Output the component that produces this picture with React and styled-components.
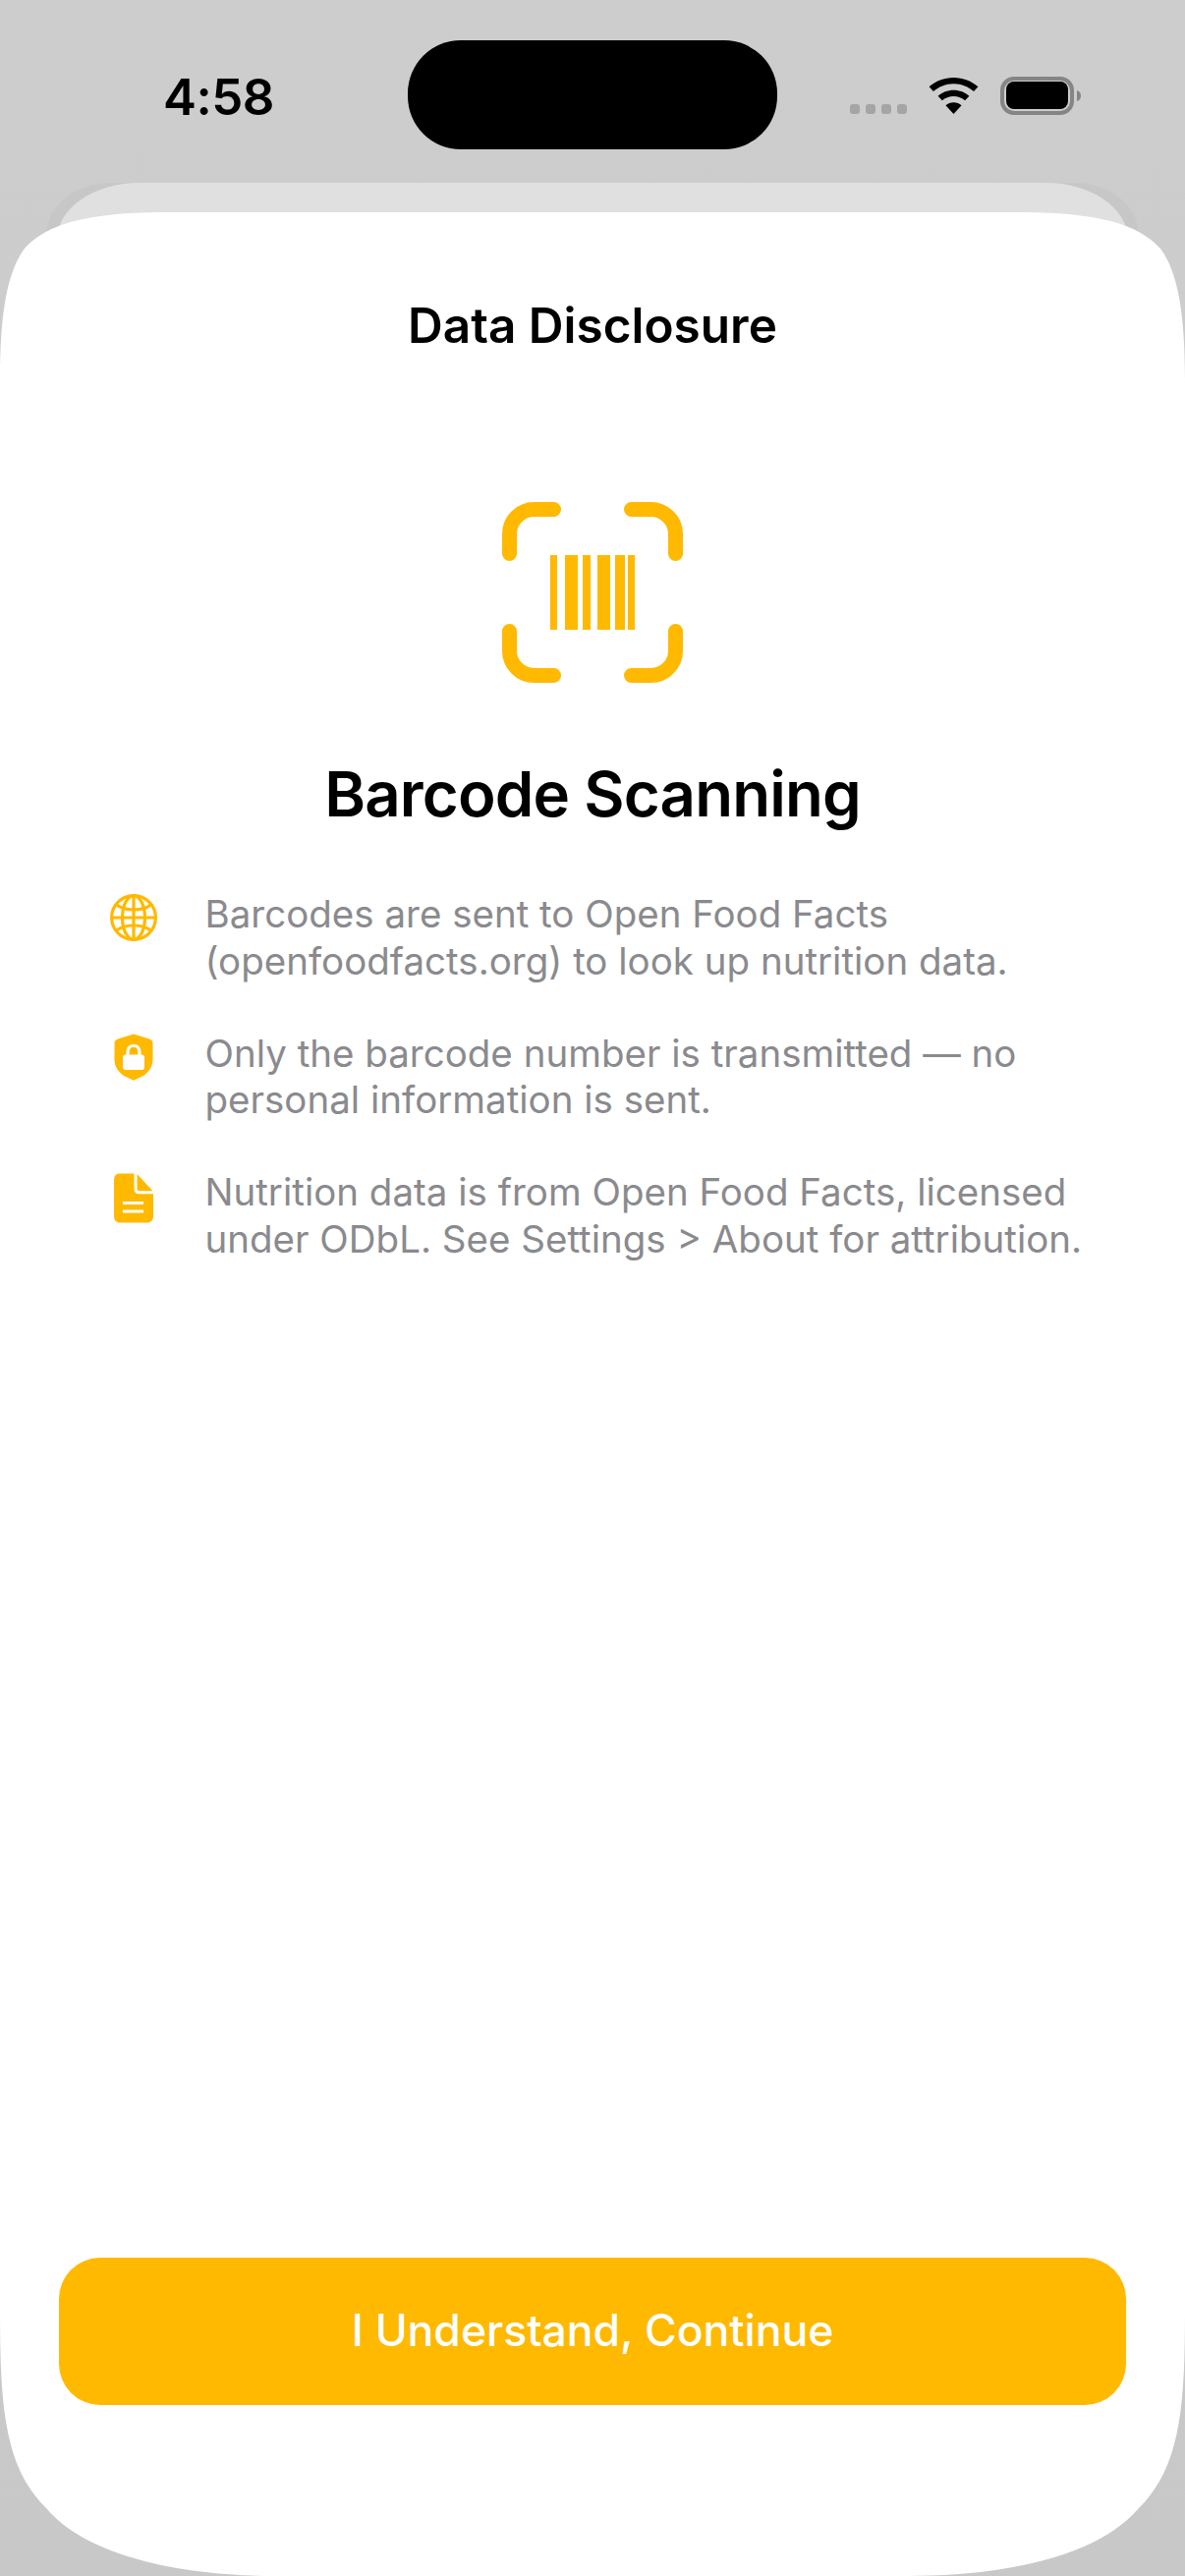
import React from 'react';
import styled, { createGlobalStyle } from 'styled-components';

const amber = '#ffb900';
const sans = '"Inter", "Liberation Sans", sans-serif';

const GlobalStyle = createGlobalStyle`
  html, body { margin: 0; padding: 0; background: #cbcbcb; }
  * { box-sizing: border-box; }
`;

const Screen = styled.div`
  position: relative;
  width: 1206px;
  height: 2622px;
  overflow: hidden;
  font-family: ${sans};
  background: linear-gradient(#cdcdcd, #c8c8c8);
`;

const StatusBar = styled.div`
  height: 186px;
  padding: 41px 66px 0 166px;
  display: flex;
  align-items: flex-start;
`;

const Time = styled.div`
  width: 249px;
  margin-top: 28px;
  font-size: 51px;
  line-height: 60px;
  font-weight: 600;
  letter-spacing: -0.5px;
  color: #000;
`;

const Island = styled.div`
  width: 376px;
  height: 111px;
  border-radius: 54px;
  background: #000;
`;

const StatusIcons = styled.div`
  margin-left: 74px;
  margin-top: 37px;
  display: flex;
  align-items: flex-start;
`;

const Signal = styled.div`
  display: flex;
  gap: 6px;
  margin-top: 28px;
  margin-right: 22px;
`;

const SignalDot = styled.span`
  width: 10px;
  height: 10px;
  border-radius: 3px;
  background: #a5a5a5;
`;

const SheetShadow = styled.div`
  margin: 0 48px;
  height: 100px;
  background: #c7c7c7;
  border-radius: 66px 66px 0 0 / 50px 50px 0 0;
`;

const SheetBehind = styled.div`
  margin: 0 10px;
  height: 100px;
  background: #e0e0e0;
  border-radius: 84px 84px 0 0 / 58px 58px 0 0;
`;

const Sheet = styled.main`
  position: absolute;
  left: 0;
  top: 216px;
  width: 1206px;
  height: 2406px;
  padding-top: 81px;
  background: #fff;
  display: flex;
  flex-direction: column;
  align-items: center;
  clip-path: path('M170 0 L1036 0 C1126 0 1161 15 1181 37 C1198 60 1206 100 1206 170 L1206 2136 C1206 2236 1201 2296 1158 2338 C1121 2381 1036 2406 924 2406 L282 2406 C170 2406 85 2381 48 2338 C5 2296 0 2236 0 2136 L0 170 C0 100 8 60 25 37 C45 15 80 0 170 0 Z');
`;

const NavTitle = styled.h1`
  margin: 0;
  font-size: 49.5px;
  line-height: 68px;
  font-weight: 600;
  color: #000;
`;

const Hero = styled.div`
  margin-top: 146px;
  width: 184px;
  height: 184px;
  color: ${amber};
  line-height: 0;
`;

const Heading = styled.h2`
  margin: 71px 0 0;
  font-size: 63.5px;
  line-height: 84px;
  font-weight: 600;
  letter-spacing: -0.85px;
  color: #000;
`;

const Points = styled.ul`
  list-style: none;
  margin: 57px 0 0;
  padding: 0;
  width: 100%;
  display: flex;
  flex-direction: column;
  gap: 46.5px;
`;

const Point = styled.li`
  display: grid;
  grid-template-columns: 208.5px 1fr;
`;

const PointIcon = styled.div`
  width: 80px;
  margin-left: 96px;
  padding-top: ${p => p.$top}px;
  display: flex;
  justify-content: center;
  align-items: flex-start;
  color: ${amber};
  line-height: 0;
`;

const PointText = styled.p`
  margin: 0;
  font-size: 38.5px;
  line-height: 47.5px;
  font-weight: 400;
  color: #8a8a8e;
  white-space: nowrap;
`;

const Footer = styled.div`
  margin-top: auto;
  width: 100%;
  padding: 0 60px 174px;
`;

const PrimaryButton = styled.button`
  display: block;
  width: 100%;
  height: 150px;
  padding: 0 0 2px;
  border: 0;
  border-radius: 42px;
  background: ${amber};
  color: #fff;
  font-family: ${sans};
  font-size: 44.5px;
  font-weight: 550;
`;

const Wifi = () => (
  <svg width="51" height="37" viewBox="0 0 50 38" preserveAspectRatio="none" style={{ marginTop: 1, marginRight: 22 }}>
    <path fill="#000" d="M25 0C15.600 0 7 3.600.6 9.600l4.200 4.800C10 9.500 17.200 6.300 25 6.300s15 3.200 20.200 8.100l4.200-4.800C43 3.600 34.400 0 25 0Z" />
    <path fill="#000" d="M25 13c-6 0-11.500 2.300-15.600 6.200l4.200 4.700c3-2.800 7-4.500 11.400-4.500s8.400 1.700 11.400 4.500l4.200-4.700C36.500 15.300 31 13 25 13Z" />
    <path fill="#000" d="M25 26c-3 0-5.800 1.100-7.900 3.100L25 38l7.900-8.900C30.800 27.100 28 26 25 26Z" />
  </svg>
);

const Battery = () => (
  <svg width="82" height="39" viewBox="0 0 82 39">
    <rect x="2" y="2" width="71" height="35" rx="12" fill="none" stroke="#858585" strokeWidth="4" />
    <rect x="6" y="5" width="63" height="28" rx="8" fill="#000" />
    <path fill="#858585" d="M78 14c2.600.8 4 2.800 4 5.500s-1.400 4.700-4 5.500Z" />
  </svg>
);

const ScanIcon = () => (
  <svg width="184" height="184" viewBox="0 0 184 184">
    <g fill="none" stroke="currentColor" strokeWidth="15" strokeLinecap="round" strokeLinejoin="round">
      <path d="M7.500 52.500V32.500a25 25 0 0 1 25-25h20" />
      <path d="M131.500 7.500h20a25 25 0 0 1 25 25v20" />
      <path d="M7.500 131.500v20a25 25 0 0 0 25 25h20" />
      <path d="M131.500 176.500h20a25 25 0 0 0 25-25v-20" />
    </g>
    <g fill="currentColor">
      <rect x="49" y="54" width="7" height="76" />
      <rect x="64" y="54" width="13" height="76" />
      <rect x="82" y="54" width="8" height="76" />
      <rect x="97" y="54" width="13" height="76" />
      <rect x="115" y="54" width="10" height="76" />
      <rect x="128" y="54" width="7" height="76" />
    </g>
  </svg>
);

const GlobeIcon = () => (
  <svg width="48" height="48" viewBox="0 0 48 48" fill="none" stroke="currentColor" strokeWidth="3.200">
    <circle cx="24" cy="24" r="22.400" />
    <path d="M24 1.500v45M1.500 24h45" />
    <ellipse cx="24" cy="24" rx="11.500" ry="22.400" />
    <path d="M6 10.500c5 4 11 5.500 18 5.500s13-1.500 18-5.500M6 37.500c5-4 11-5.500 18-5.500s13 1.500 18 5.500" />
  </svg>
);

const ShieldIcon = () => (
  <svg width="40" height="48" viewBox="0 0 40 48">
    <path fill="currentColor" d="M20 .5 36 5.500c2 .7 3.500 2 3.500 4.200V26c0 8-4 13-9.500 17L20.500 47.500c-.4.200-.8.200-1 0L10 43C4.500 39 .5 34 .5 26V9.700c0-2.200 1.500-3.500 3.500-4.200Z" />
    <path fill="#fff" d="M20 11c-5 0-7.500 3.400-7.500 7.700V21.500h-.800c-1.700 0-2.700 1.100-2.700 3V34c0 2 1 3 2.700 3h16.600c1.700 0 2.700-1 2.700-3v-9.500c0-1.900-1-3-2.700-3h-.800v-2.800C27.500 14.400 25 11 20 11Zm-4.400 10.500v-3c0-2.900 1.700-4.700 4.400-4.700s4.400 1.800 4.400 4.700v3Z" />
  </svg>
);

const DocIcon = () => (
  <svg width="40" height="51" viewBox="0 0 40 50">
    <path fill="currentColor" d="M6 0h14.500v15.500c0 3.300 2 5.300 5.300 5.300H40V43c0 4.500-2.300 7-6.500 7H6.500C2.300 50 0 47.500 0 43V7C0 2.500 2 0 6 0Z" />
    <path fill="currentColor" d="M23.500 .5 39.500 17.800H26c-1.700 0-2.500-.8-2.500-2.500Z" />
    <path fill="none" stroke="#fff" strokeWidth="3" d="M9 30h21M9 38.500h21" />
  </svg>
);

const points = [
  { icon: <GlobeIcon />, top: 3, lines: ['Barcodes are sent to Open Food Facts', '(openfoodfacts.org) to look up nutrition data.'] },
  { icon: <ShieldIcon />, top: 3, lines: ['Only the barcode number is transmitted — no', 'personal information is sent.'] },
  { icon: <DocIcon />, top: 4, lines: ['Nutrition data is from Open Food Facts, licensed', 'under ODbL. See Settings > About for attribution.'] },
];

export default function App() {
  return (
    <Screen>
      <GlobalStyle />
      <StatusBar>
        <Time>4:58</Time>
        <Island />
        <StatusIcons>
          <Signal>
            <SignalDot /><SignalDot /><SignalDot /><SignalDot />
          </Signal>
          <Wifi />
          <Battery />
        </StatusIcons>
      </StatusBar>
      <SheetShadow><SheetBehind /></SheetShadow>
      <Sheet>
        <NavTitle>Data Disclosure</NavTitle>
        <Hero><ScanIcon /></Hero>
        <Heading>Barcode Scanning</Heading>
        <Points>
          {points.map((p) => (
            <Point key={p.lines[0]}>
              <PointIcon $top={p.top}>{p.icon}</PointIcon>
              <PointText>{p.lines[0]}<br />{p.lines[1]}</PointText>
            </Point>
          ))}
        </Points>
        <Footer>
          <PrimaryButton>I Understand, Continue</PrimaryButton>
        </Footer>
      </Sheet>
    </Screen>
  );
}
